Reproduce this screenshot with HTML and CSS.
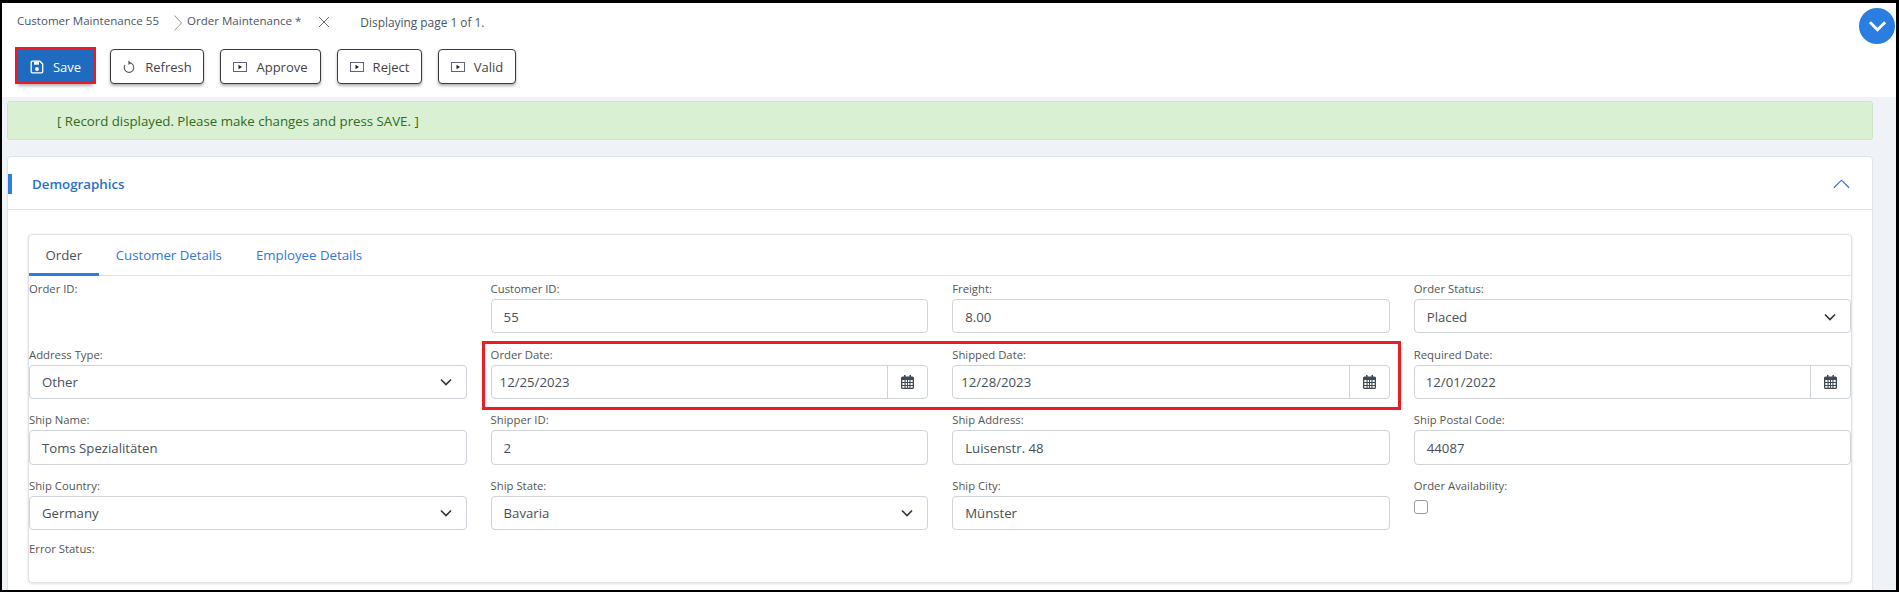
FILE: index.html
```html
<!DOCTYPE html>
<html lang="en">
<head>
<meta charset="utf-8">
<title>Order Maintenance</title>
<link rel="stylesheet" href="styles.css">
</head>
<body>
<div class="frame">
  <header class="top">
    <div class="crumbs">
      <span class="crumb">Customer Maintenance 55</span>
      <svg class="crumb-sep" viewBox="0 0 8 16"><path d="M.5.5 7.5 8 .5 15.500" /></svg>
      <span class="crumb">Order Maintenance *</span>
      <svg class="crumb-x" viewBox="0 0 10 10"><path d="M0 0 10 10M10 0 0 10" /></svg>
      <span class="paging">Displaying page 1 of 1.</span>
    </div>
    <div class="toolbar">
      <button class="btn btn-primary">
        <svg class="ico" viewBox="0 0 14 14"><path fill="none" stroke="#fff" stroke-width="1.300" stroke-linejoin="round" d="M2.300 1.200h7.600l2.800 2.800v7.700a1.100 1.100 0 0 1-1.100 1.100H2.300a1.100 1.100 0 0 1-1.100-1.100V2.300a1.100 1.100 0 0 1 1.100-1.100Z"/><path fill="#fff" d="M4 1.500h5v3.200H4Z"/><circle fill="#fff" cx="7" cy="9" r="1.900"/></svg>
        Save
      </button>
      <button class="btn btn-refresh">
        <svg class="ico" viewBox="0 0 14 14"><path fill="none" stroke="#555" stroke-width="1.100" d="M7 2.800A4.800 4.800 0 1 1 3 5"/><path fill="#555" d="M6.400 .6 9 2.800 6.400 5Z"/></svg>
        Refresh
      </button>
      <button class="btn btn-approve">
        <svg class="ico" viewBox="0 0 14 12"><rect x=".5" y="1.500" width="13" height="9" fill="#fff" stroke="#6a5f78"/><path fill="#222" d="M5.500 3.800 9 6 5.500 8.200Z"/></svg>
        Approve
      </button>
      <button class="btn btn-reject">
        <svg class="ico" viewBox="0 0 14 12"><rect x=".5" y="1.500" width="13" height="9" fill="#fff" stroke="#6a5f78"/><path fill="#222" d="M5.500 3.800 9 6 5.500 8.200Z"/></svg>
        Reject
      </button>
      <button class="btn btn-valid">
        <svg class="ico" viewBox="0 0 14 12"><rect x=".5" y="1.500" width="13" height="9" fill="#fff" stroke="#6a5f78"/><path fill="#222" d="M5.500 3.800 9 6 5.500 8.200Z"/></svg>
        Valid
      </button>
    </div>
  </header>

  <button class="fab" aria-label="Collapse">
    <svg viewBox="0 0 20 12"><path d="M2 2 10 10 18 2"/></svg>
  </button>

  <main class="content">
    <div class="alert">[ Record displayed. Please make changes and press SAVE. ]</div>

    <section class="card">
      <div class="card-head">
        <h2 class="card-title">Demographics</h2>
        <svg class="card-toggle" viewBox="0 0 18 11"><path d="M1 10 9 2 17 10"/></svg>
      </div>
      <div class="card-body">
        <div class="panel">
          <nav class="tabs">
            <a class="tab tab-active">Order</a>
            <a class="tab">Customer Details</a>
            <a class="tab">Employee Details</a>
          </nav>
          <div class="form">
            <div class="field"><label>Order ID:</label></div>
            <div class="field"><label>Customer ID:</label><div class="control">55</div></div>
            <div class="field"><label>Freight:</label><div class="control">8.00</div></div>
            <div class="field"><label>Order Status:</label><div class="control select">Placed<svg class="caret" viewBox="0 0 12 8"><path d="M1 1.500 6 6.500 11 1.500"/></svg></div></div>

            <div class="field"><label>Address Type:</label><div class="control select">Other<svg class="caret" viewBox="0 0 12 8"><path d="M1 1.500 6 6.500 11 1.500"/></svg></div></div>
            <div class="field"><label>Order Date:</label><div class="control date"><span class="date-value">12/25/2023</span><span class="date-btn"><svg class="cal" viewBox="0 0 13 14"><use href="#calendar"/></svg></span></div></div>
            <div class="field"><label>Shipped Date:</label><div class="control date"><span class="date-value">12/28/2023</span><span class="date-btn"><svg class="cal" viewBox="0 0 13 14"><use href="#calendar"/></svg></span></div></div>
            <div class="field"><label>Required Date:</label><div class="control date"><span class="date-value date-value-wide">12/01/2022</span><span class="date-btn"><svg class="cal" viewBox="0 0 13 14"><use href="#calendar"/></svg></span></div></div>

            <div class="field"><label>Ship Name:</label><div class="control">Toms Spezialitäten</div></div>
            <div class="field"><label>Shipper ID:</label><div class="control">2</div></div>
            <div class="field"><label>Ship Address:</label><div class="control">Luisenstr. 48</div></div>
            <div class="field"><label>Ship Postal Code:</label><div class="control">44087</div></div>

            <div class="field"><label>Ship Country:</label><div class="control select">Germany<svg class="caret" viewBox="0 0 12 8"><path d="M1 1.500 6 6.500 11 1.500"/></svg></div></div>
            <div class="field"><label>Ship State:</label><div class="control select">Bavaria<svg class="caret" viewBox="0 0 12 8"><path d="M1 1.500 6 6.500 11 1.500"/></svg></div></div>
            <div class="field"><label>Ship City:</label><div class="control">Münster</div></div>
            <div class="field"><label>Order Availability:</label><span class="check"></span></div>

            <div class="field field-last"><label>Error Status:</label></div>
          </div>
        </div>
      </div>
    </section>
  </main>

  <div class="mark mark-save"></div>
  <div class="mark mark-dates"></div>

  <svg class="defs" aria-hidden="true"><symbol id="calendar" viewBox="0 0 13 14"><path fill="#3f4a57" fill-rule="evenodd" d="M3 0h1.500v1.500h4V0H10v1.500h1.500A1.500 1.500 0 0 1 13 3v9.500a1.500 1.500 0 0 1-1.500 1.500h-10A1.500 1.500 0 0 1 0 12.500V3a1.500 1.500 0 0 1 1.500-1.500H3ZM1.300 5v2h2.200V5Zm3.300 0v2h1.400V5Zm2.400 0v2h1.400V5Zm2.500 0v2h2.200V5ZM1.300 8v2h2.200V8Zm3.300 0v2h1.400V8Zm2.400 0v2h1.400V8Zm2.500 0v2h2.200V8ZM1.300 11v1.700h2.200V11Zm3.300 0v1.700h1.400V11Zm2.400 0v1.700h1.400V11Zm2.500 0v1.700h2.200V11Z"/></symbol></svg>
</div>
</body>
</html>
```

FILE: styles.css
```css
* { box-sizing: border-box; }
html, body { margin: 0; padding: 0; }
body { width: 1899px; height: 592px; overflow: hidden; background: #000; }

.frame {
  position: relative;
  width: 1899px;
  height: 592px;
  overflow: hidden;
  border-style: solid;
  border-color: #000;
  border-width: 3px 3px 2px 2px;
  background: #eff3f7;
  font-family: "Open Sans", "Noto Sans", sans-serif;
  color: #495057;
}

/* header */
.top { height: 94px; background: #fff; }
.crumbs {
  display: flex;
  align-items: center;
  height: 35px;
  padding-left: 15px;
  font-size: 11.550px;
  color: #4b5563;
}
.crumb-sep { width: 8px; height: 16px; margin: 4px 5px 0 15px; fill: none; stroke: #999; stroke-width: 1; }
.crumb-x { width: 10px; height: 10px; margin: 3px 31px 0 18px; fill: none; stroke: #666; stroke-width: 1; }
.paging { margin-top: 3px; font-size: 11.900px; }

.toolbar { display: flex; align-items: flex-start; padding: 11px 0 0 16px; gap: 16px; }
.btn {
  display: flex;
  align-items: center;
  justify-content: center;
  gap: 9px;
  width: 94px;
  height: 35px;
  padding: 0;
  border: 1px solid #3a3a3a;
  border-radius: 4px;
  background: #fff;
  box-shadow: 0 2px 3px rgba(0,0,0,.3);
  font: inherit;
  font-size: 13px;
  color: #444;
}
.btn-primary { width: 75px; background: #1f6bbf; border-color: #1f6bbf; color: #fff; border-radius: 0; margin-right: 1px; }
.btn-approve { width: 101px; }
.btn-reject { width: 85px; }
.btn-valid { width: 78px; }
.ico { width: 14px; height: 14px; flex: none; }

.fab {
  position: absolute;
  top: 5px;
  left: 1857px;
  width: 36px;
  height: 36px;
  padding: 0;
  border: 0;
  border-radius: 50%;
  background: #2a7de1;
  display: flex;
  align-items: center;
  justify-content: center;
}
.fab svg { width: 19px; height: 12px; fill: none; stroke: #fff; stroke-width: 3; }

/* content */
.content { padding: 4px 23px 0 5px; }
.alert {
  height: 39px;
  padding-left: 49px;
  display: flex;
  align-items: center;
  background: #daf0d2;
  border: 1px solid #cbe6c3;
  border-radius: 3px;
  font-size: 13.250px;
  color: #2f6b22;
}
.card {
  margin: 16px 0 0 0;
  background: #fff;
  border: 1px solid #dfe3e8;
  border-radius: 4px 4px 0 0;
  height: 500px;
}
.card-head {
  position: relative;
  height: 53px;
  display: flex;
  align-items: center;
  justify-content: space-between;
  padding: 1px 22px 0 24px;
  border-bottom: 1px solid #dfe1e4;
}
.card-head::before {
  content: "";
  position: absolute;
  left: 0;
  top: 17px;
  width: 4px;
  height: 20px;
  background: #2a7de1;
}
.card-title { margin: 0; font-size: 13.300px; font-weight: 600; color: #2a6fc9; }
.card-toggle { width: 17px; height: 11px; fill: none; stroke: #2a6fc9; stroke-width: 1.200; }

.card-body { padding: 24px 20px 0 20px; }
.panel {
  height: 349px;
  background: #fff;
  border: 1px solid #dfe1e4;
  border-radius: 4px;
  box-shadow: 0 1px 3px rgba(0,0,0,.12);
}
.tabs { display: flex; height: 41px; border-bottom: 1px solid #dfe1e4; }
.tab {
  display: flex;
  align-items: center;
  height: 41px;
  padding: 0 17px 1px;
  font-size: 13.250px;
  color: #2f78dc;
}
.tab-active { color: #4a4f55; border-bottom: 3px solid #2a7de1; padding: 2px 16.500px 0; }

.form {
  display: grid;
  grid-template-columns: repeat(4, 437.600px);
  column-gap: 24px;
  grid-auto-rows: 65.600px;
  padding-top: 3px;
}
.field { display: flex; flex-direction: column; align-items: flex-start; }
.field-last { margin-top: -2.500px; }
.field label { height: 20px; line-height: 20px; font-size: 11.300px; color: #555; }
.control {
  display: flex;
  align-items: center;
  width: 100%;
  height: 34.400px;
  padding: 1px 12px 0;
  border: 1px solid #ced4da;
  border-radius: 4px;
  background: #fff;
  font-size: 13.200px;
  color: #495057;
}
.select { justify-content: space-between; padding-right: 14px; }
.caret { width: 12px; height: 8px; fill: none; stroke: #333; stroke-width: 1.600; }
.date { padding: 0; }
.date-value { flex: 1; padding: 1px 0 0 8px; }
.date-value-wide { padding-left: 11px; }
.date-btn {
  display: flex;
  align-items: center;
  justify-content: center;
  width: 40px;
  height: 100%;
  border-left: 1px solid #ced4da;
}
.cal { width: 13px; height: 14px; }
.check {
  width: 14px;
  height: 14px;
  margin-top: 4px;
  border: 1px solid #999;
  border-radius: 3px;
  background: #fff;
}

/* review annotations drawn over the page */
.mark { position: absolute; border: 3px solid #ed1c24; pointer-events: none; }
.mark-save { left: 13px; top: 44px; width: 81px; height: 37px; }
.mark-dates { left: 480px; top: 338px; width: 919px; height: 69px; }
.defs { position: absolute; width: 0; height: 0; }
```
